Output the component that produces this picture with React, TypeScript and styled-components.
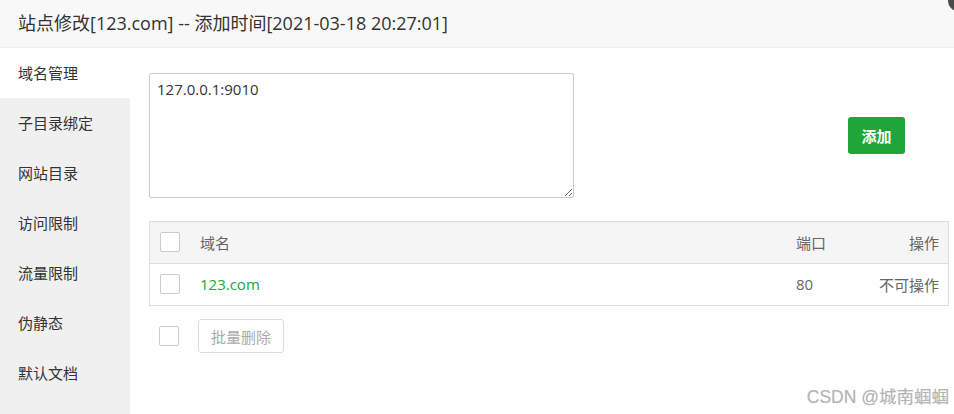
import React from "react";
import styled, { createGlobalStyle } from "styled-components";

const Global = createGlobalStyle`
  html, body { margin: 0; padding: 0; background: #fff; }
  body {
    width: 954px; height: 414px; overflow: hidden;
    font-family: "Open Sans", "Noto Sans CJK SC", sans-serif;
    color: #333;
  }
  * { box-sizing: border-box; }
`;

const Frame = styled.div`
  position: relative;
  width: 954px;
  height: 414px;
  display: flex;
  flex-direction: column;
  overflow: hidden;
`;

const Header = styled.div`
  height: 48px;
  flex: none;
  background: #f8f8f8;
  border-bottom: 1px solid #eee;
  display: flex;
  align-items: center;
  padding: 0 0 4px 18px;
  font-size: 18px;
  color: #333;
`;

const CloseDot = styled.div`
  position: absolute;
  left: 948px;
  top: -9px;
  width: 20px;
  height: 20px;
  border-radius: 50%;
  background: #4a4a4a;
`;

const Body = styled.div`
  flex: 1;
  display: flex;
  min-height: 0;
`;

const Side = styled.div`
  width: 130px;
  flex: none;
  background: #f0f0f0;
  display: flex;
  flex-direction: column;
`;

const SideItem = styled.div<{ $active?: boolean }>`
  height: 50px;
  display: flex;
  align-items: center;
  padding: 0 0 2px 18px;
  font-size: 15px;
  color: #333;
  background: ${(p) => (p.$active ? "#fff" : "transparent")};
`;

const Main = styled.div`
  flex: 1;
  padding: 25px 6px 0 19px;
  display: flex;
  flex-direction: column;
`;

const AddRow = styled.div`
  display: flex;
  align-items: center;
`;

const Area = styled.textarea`
  display: block;
  width: 425px;
  height: 125px;
  border: 1px solid #ccc;
  border-radius: 2px;
  padding: 5px 7px;
  font-family: "Open Sans", "Noto Sans CJK SC", sans-serif;
  font-size: 15px;
  color: #333;
  line-height: 20px;
  resize: both;
  outline: none;
`;

const AddButton = styled.button`
  margin-left: 274px;
  width: 57px;
  height: 37px;
  border: none;
  border-radius: 3px;
  background: #20a53a;
  color: #fff;
  font-family: "Noto Sans CJK SC", sans-serif;
  font-size: 15px;
  font-weight: 700;
  padding: 0;
`;

const Table = styled.div`
  margin-top: 23px;
  width: 800px;
  border: 1px solid #ddd;
  display: flex;
  flex-direction: column;
`;

const Row = styled.div<{ $head?: boolean }>`
  height: ${(p) => (p.$head ? "42px" : "41px")};
  display: grid;
  grid-template-columns: 50px 1fr 82px 70px;
  align-items: center;
  padding-bottom: 1px;
  background: ${(p) => (p.$head ? "#f5f5f5" : "#fff")};
  border-bottom: ${(p) => (p.$head ? "1px solid #ddd" : "none")};
  font-size: 15px;
  color: #666;
`;

const Check = styled.span`
  display: block;
  width: 20px;
  height: 20px;
  border: 1px solid #ccc;
  border-radius: 2px;
  background: #fff;
  margin-left: 10px;
`;

const Cell = styled.div<{ $right?: boolean; $green?: boolean }>`
  text-align: ${(p) => (p.$right ? "right" : "left")};
  padding-right: ${(p) => (p.$right ? "9px" : "0")};
  color: ${(p) => (p.$green ? "#20a53a" : "inherit")};
`;

const Footer = styled.div`
  margin-top: 13px;
  display: flex;
  align-items: center;
  gap: 19px;
`;

const BatchButton = styled.button`
  width: 86px;
  height: 34px;
  border: 1px solid #ddd;
  border-radius: 3px;
  background: #fff;
  color: #aaa;
  font-family: "Noto Sans CJK SC", sans-serif;
  font-size: 15px;
  padding: 0;
`;

const Watermark = styled.div`
  position: absolute;
  right: 5px;
  bottom: 6px;
  font-family: "Liberation Sans", "Noto Sans CJK SC", sans-serif;
  font-size: 17.5px;
  color: #b5b5b5;
  text-shadow: 0 0 1px #ddd;
`;

const menu = ["域名管理", "子目录绑定", "网站目录", "访问限制", "流量限制", "伪静态", "默认文档"];

export default function App() {
  return (
    <>
      <Global />
      <Frame>
        <Header>站点修改[123.com] -- 添加时间[2021-03-18 20:27:01]</Header>
        <CloseDot />
        <Body>
          <Side>
            {menu.map((m, i) => (
              <SideItem key={m} $active={i === 0}>
                {m}
              </SideItem>
            ))}
          </Side>
          <Main>
            <AddRow>
              <Area defaultValue="127.0.0.1:9010" />
              <AddButton>添加</AddButton>
            </AddRow>
            <Table>
              <Row $head>
                <Check />
                <Cell>域名</Cell>
                <Cell>端口</Cell>
                <Cell $right>操作</Cell>
              </Row>
              <Row>
                <Check />
                <Cell $green>123.com</Cell>
                <Cell>80</Cell>
                <Cell $right>不可操作</Cell>
              </Row>
            </Table>
            <Footer>
              <Check />
              <BatchButton>批量删除</BatchButton>
            </Footer>
          </Main>
        </Body>
        <Watermark>CSDN @城南蝈蝈</Watermark>
      </Frame>
    </>
  );
}
